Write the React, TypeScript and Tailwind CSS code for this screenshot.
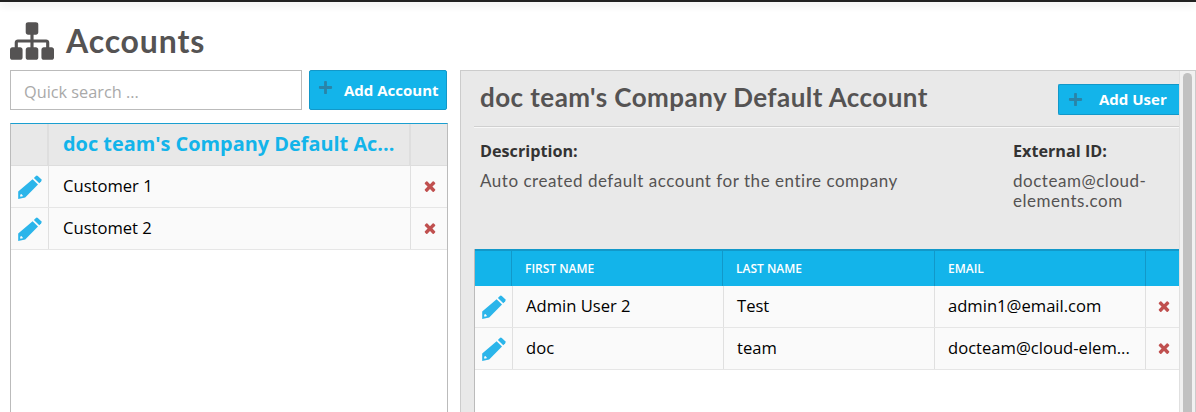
import React from 'react';
import { FaPlus } from 'react-icons/fa';

const accounts = ['Customer 1', 'Customet 2'];

const users = [
  { first: 'Admin User 2', last: 'Test', email: 'admin1@email.com' },
  { first: 'doc', last: 'team', email: 'docteam@cloud-elem...' },
];

const SitemapIcon = () => (
  <svg viewBox="0 128 1792 1536" className="w-[44px] h-[38px] fill-[#555353]">
    <path d="M1792 1248v320q0 40-28 68t-68 28h-320q-40 0-68-28t-28-68v-320q0-40 28-68t68-28h96v-192h-512v192h96q40 0 68 28t28 68v320q0 40-28 68t-68 28h-320q-40 0-68-28t-28-68v-320q0-40 28-68t68-28h96v-192h-512v192h96q40 0 68 28t28 68v320q0 40-28 68t-68 28h-320q-40 0-68-28t-28-68v-320q0-40 28-68t68-28h96v-192q0-52 38-90t90-38h512v-192h-96q-40 0-68-28t-28-68v-320q0-40 28-68t68-28h320q40 0 68 28t28 68v320q0 40-28 68t-68 28h-96v192h512q52 0 90 38t38 90v192h96q40 0 68 28t28 68z" />
  </svg>
);

// solid pencil: body with a small notch by the tip, separate eraser cap
const EditIcon = () => (
  <svg viewBox="0 0 24 24" className="w-[24px] h-[24px] fill-[#2bb5ea]">
    <path fillRule="evenodd" d="M14.6 4.2L20 9.6 7.2 22.4 0.2 24V16.6ZM2.4 19.4L2 21.6 4.4 21.4 4.8 20.4 3.4 19Z" />
    <path d="M15.9 2.9L17.9 0.9Q18.8 0.1 19.8 0.9L23.3 4.3Q24 5.2 23.2 6.2L21.3 8.3Z" />
  </svg>
);

const DeleteIcon = () => (
  <svg viewBox="0 0 1792 1792" className="w-[16px] h-[16px] fill-[#c0504f]">
    <path d="M1490 1322q0 40-28 68l-136 136q-28 28-68 28t-68-28l-294-294-294 294q-28 28-68 28t-68-28l-136-136q-28-28-28-68t28-68l294-294-294-294q-28-28-28-68t28-68l136-136q28-28 68-28t68 28l294 294 294-294q28-28 68-28t68 28l136 136q28 28 28 68t-28 68l-294 294 294 294q28 28 28 68z" />
  </svg>
);

const AccountsPanel = () => (
  <div className="w-[438px] shrink-0 flex flex-col">
    <div className="flex h-[40px]">
      <input
        readOnly
        placeholder="Quick search ..."
        className="w-[292px] border border-[#bbbbbb] pl-[13px] pt-[4px] text-[16.3px] bg-white outline-none placeholder:text-[#a9a9a9]"
      />
      <button className="ml-[7px] w-[138px] rounded-[2px] border border-[#1298c9] bg-[#13b4ea] flex items-center pl-[8px] text-white font-bold text-[15px]">
        <FaPlus className="w-[15px] h-[15px] text-[#2a84a8] mb-[5px]" />
        <span className="ml-[11px]">Add Account</span>
      </button>
    </div>

    <div className="mt-[13px] flex-1 border border-[#bbbbbb] border-t-[#1a9fd0] border-b-0 bg-white">
      <div className="grid grid-cols-[38px_1fr_36px] h-[42px] bg-[#e8e8e8] border-b border-[#dddddd]">
        <div className="border-r-2 border-[#dedede]" />
        <div className="border-r-2 border-[#dedede] pl-[14px] pb-[2px] flex items-center text-[19.9px] font-bold text-[#13b4ea] whitespace-nowrap">
          doc team's Company Default Ac...
        </div>
        <div />
      </div>
      {accounts.map(name => (
        <div key={name} className="grid grid-cols-[38px_1fr_36px] h-[42px] bg-[#fafafa] border-b border-[#e6e6e6]">
          <div className="border-r border-[#e0e0e0] flex items-center justify-center"><EditIcon /></div>
          <div className="border-r border-[#e0e0e0] pl-[14px] flex items-center text-[16.6px] text-black">{name}</div>
          <div className="flex items-center justify-center pl-[1px] pb-[1px]"><DeleteIcon /></div>
        </div>
      ))}
    </div>
  </div>
);

const AccountDetail = () => (
  <div className="flex-1 min-w-0 border border-[#cccccc] border-b-0 bg-[#e9e9e9] flex">
    <div className="flex-1 min-w-0 flex flex-col">
      <div className="flex justify-between ml-[13px] h-[56px] border-b border-[#d0d0d0] shadow-[0_1px_0_#f8f8f8] pl-[6px]">
        <h2 className="font-['Lato',sans-serif] text-[26px] tracking-[0.44px] font-bold text-[#555353] leading-[52px]">
          doc team's Company Default Account
        </h2>
        <button className="mt-[13px] w-[121px] h-[31px] rounded-l-[2px] border border-[#1298c9] border-r-0 bg-[#13b4ea] flex items-center pl-[9px] text-white font-bold text-[15px]">
          <FaPlus className="w-[15px] h-[15px] text-[#2a84a8]" />
          <span className="ml-[16px] mb-[1px]">Add User</span>
        </button>
      </div>

      <div className="flex justify-between pl-[19px] h-[122px] pt-[13px] text-[#555353]">
        <div>
          <div className="text-[16.2px] font-bold text-[#333333] leading-[22px]">Description:</div>
          <p className="font-['Lato',sans-serif] text-[17px] tracking-[0.53px] mt-[9px] leading-[20px]">
            Auto created default account for the entire company
          </p>
        </div>
        <div className="w-[166px]">
          <div className="text-[16.2px] font-bold text-[#333333] leading-[22px]">External ID:</div>
          <p className="font-['Lato',sans-serif] text-[17px] tracking-[0.53px] mt-[9px] leading-[20px]">
            docteam@cloud-
            <br />
            elements.com
          </p>
        </div>
      </div>

      <div className="flex-1 ml-[13px] bg-white border-l border-[#bbbbbb]">
        <div className="grid grid-cols-[37px_211px_212px_211px_1fr] h-[37px] bg-[#13b4ea] border-t-2 border-[#1298c9] text-white text-[12px] font-semibold uppercase">
          <div className="border-r border-[#1298c9]" />
          <div className="border-r border-[#1298c9] pl-[13px] flex items-center">First Name</div>
          <div className="border-r border-[#1298c9] pl-[13px] flex items-center">Last Name</div>
          <div className="border-r border-[#1298c9] pl-[13px] flex items-center">Email</div>
          <div />
        </div>
        {users.map(user => (
          <div key={user.first} className="grid grid-cols-[38px_211px_211px_211px_1fr] h-[42px] bg-[#fafafa] border-b border-[#e6e6e6] text-[16.6px] text-black">
            <div className="border-r border-[#e0e0e0] flex items-center justify-center"><EditIcon /></div>
            <div className="border-r border-[#e0e0e0] pl-[13px] flex items-center">{user.first}</div>
            <div className="border-r border-[#e0e0e0] pl-[13px] flex items-center">{user.last}</div>
            <div className="border-r border-[#e0e0e0] pl-[13px] flex items-center whitespace-nowrap">{user.email}</div>
            <div className="flex items-center justify-center pl-[3px] pb-[1px]"><DeleteIcon /></div>
          </div>
        ))}
      </div>
    </div>

    {/* scrollbar */}
    <div className="w-[16px] shrink-0 bg-[#f1f1f1] border-l border-[#e0e0e0] pl-[3px] pt-[2px]">
      <div className="w-[9px] h-full rounded-t-[5px] bg-[#c1c1c1]" />
    </div>
  </div>
);

export default function App() {
  return (
    <div className="w-[1196px] h-[412px] overflow-hidden bg-white font-['Open_Sans',sans-serif] flex flex-col">
      <div className="h-[2px] bg-[#222222] shadow-[0_2px_8px_rgba(0,0,0,0.2)] shrink-0" />
      <div className="h-[68px] shrink-0 pl-[10px] flex items-start pt-[20px]">
        <SitemapIcon />
        <h1 className="ml-[12px] font-['Lato',sans-serif] text-[32px] tracking-[0.85px] font-bold text-[#555353] leading-[38px]">Accounts</h1>
      </div>
      <div className="flex-1 min-h-0 flex pl-[10px] gap-[12px]">
        <AccountsPanel />
        <AccountDetail />
      </div>
    </div>
  );
}
